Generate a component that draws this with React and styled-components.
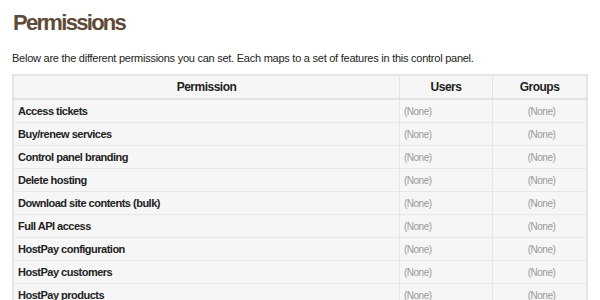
import React from 'react'
import styled, { createGlobalStyle } from 'styled-components'

const GlobalStyle = createGlobalStyle`
  html, body {
    margin: 0;
    padding: 0;
    background: #ffffff;
  }
  body {
    font-family: 'Liberation Sans', Arial, sans-serif;
    color: #222;
  }
`

const permissions = [
  'Access tickets',
  'Buy/renew services',
  'Control panel branding',
  'Delete hosting',
  'Download site contents (bulk)',
  'Full API access',
  'HostPay configuration',
  'HostPay customers',
  'HostPay products',
]

function App() {
  return (
    <StyledPage>
      <GlobalStyle />
      <Title>Permissions</Title>
      <Intro>
        Below are the different permissions you can set. Each maps to a set of features in this control panel.
      </Intro>
      <Table>
        <thead>
          <tr>
            <HeadCell>Permission</HeadCell>
            <HeadCell $width='92px'>Users</HeadCell>
            <HeadCell $width='93px'>Groups</HeadCell>
          </tr>
        </thead>
        <tbody>
          {permissions.map((name) => (
            <tr key={name}>
              <NameCell>{name}</NameCell>
              <NoneCell>(None)</NoneCell>
              <NoneCell $center>(None)</NoneCell>
            </tr>
          ))}
        </tbody>
      </Table>
    </StyledPage>
  )
}

const StyledPage = styled.div`
  padding: 9px 12px 0 12px;
  width: 576px;
`

const Title = styled.h1`
  margin: 0 0 0 1px;
  font-family: 'Liberation Sans', Arial, sans-serif;
  font-size: 22px;
  font-weight: bold;
  letter-spacing: -1.7px;
  line-height: 28px;
  color: #5e4a36;
`

const Intro = styled.p`
  margin: 14px 0 9px 0;
  font-size: 11px;
  line-height: 14px;
  letter-spacing: -0.25px;
  color: #222;
`

const Table = styled.table`
  width: 576px;
  table-layout: fixed;
  border-collapse: collapse;
  background: #f6f6f6;
  border: 2px solid #e6e6e6;
`

const HeadCell = styled.th`
  width: ${(p) => p.$width || 'auto'};
  height: 22px;
  padding: 0;
  border: 1px solid #e3e3e3;
  border-bottom-width: 2px;
  font-size: 12px;
  font-weight: bold;
  letter-spacing: -0.5px;
  color: #222;
  text-align: center;
`

const NameCell = styled.td`
  height: 22px;
  padding: 0 0 0 4px;
  border: 1px solid #e6e6e6;
  font-size: 11px;
  font-weight: bold;
  letter-spacing: -0.5px;
  color: #222;
`

const NoneCell = styled.td`
  height: 22px;
  padding: 0 0 0 4px;
  border: 1px solid #e6e6e6;
  font-size: 10px;
  letter-spacing: -0.5px;
  color: #999;
  text-align: ${(p) => (p.$center ? 'center' : 'left')};
`

export default App
